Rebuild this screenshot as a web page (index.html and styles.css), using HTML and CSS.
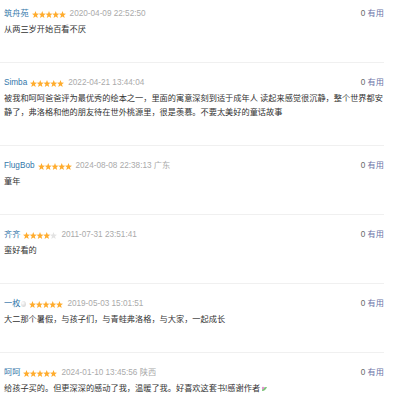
FILE: index.html
```html
<!DOCTYPE html>
<html lang="zh-CN">
<head>
  <meta charset="UTF-8">
  <title>短评</title>
  <link rel="stylesheet" href="styles.css">
</head>
<body>

<svg width="0" height="0" class="defs">
  <defs>
    <polygon id="star" points="3.5,0.1 4.45,2.5 7,2.65 5,4.25 5.7,6.9 3.5,5.4 1.3,6.9 2,4.25 0,2.65 2.55,2.5"/>
  </defs>
</svg>

<div class="comments">
  <div class="comment">
    <div class="comment-info">
      <a class="user">筑舟苑</a>
      <svg class="stars" width="34" height="7" viewBox="0 0 34 7"><use href="#star" x="0"/><use href="#star" x="6.75"/><use href="#star" x="13.5"/><use href="#star" x="20.25"/><use href="#star" x="27"/></svg>
      <span class="time">2020-04-09 22:52:50</span>
      <span class="vote"><span class="count">0</span> <a>有用</a></span>
    </div>
    <p class="short">从两三岁开始百看不厌</p>
  </div>

  <div class="comment">
    <div class="comment-info">
      <a class="user">Simba</a>
      <svg class="stars" width="34" height="7" viewBox="0 0 34 7"><use href="#star" x="0"/><use href="#star" x="6.75"/><use href="#star" x="13.5"/><use href="#star" x="20.25"/><use href="#star" x="27"/></svg>
      <span class="time">2022-04-21 13:44:04</span>
      <span class="vote"><span class="count">0</span> <a>有用</a></span>
    </div>
    <p class="short">被我和呵呵爸爸评为最优秀的绘本之一，里面的寓意深刻到适于成年人 读起来感觉很沉静，整个世界都安静了，弗洛格和他的朋友待在世外桃源里，很是羡慕。不要太美好的童话故事</p>
  </div>

  <div class="comment">
    <div class="comment-info">
      <a class="user">FlugBob</a>
      <svg class="stars" width="34" height="7" viewBox="0 0 34 7"><use href="#star" x="0"/><use href="#star" x="6.75"/><use href="#star" x="13.5"/><use href="#star" x="20.25"/><use href="#star" x="27"/></svg>
      <span class="time">2024-08-08 22:38:13 广东</span>
      <span class="vote"><span class="count">0</span> <a>有用</a></span>
    </div>
    <p class="short">童年</p>
  </div>

  <div class="comment">
    <div class="comment-info">
      <a class="user">齐齐</a>
      <svg class="stars" width="34" height="7" viewBox="0 0 34 7"><use href="#star" x="0"/><use href="#star" x="6.75"/><use href="#star" x="13.5"/><use href="#star" x="20.25"/><use href="#star" x="27" class="off"/></svg>
      <span class="time">2011-07-31 23:51:41</span>
      <span class="vote"><span class="count">0</span> <a>有用</a></span>
    </div>
    <p class="short">蛮好看的</p>
  </div>

  <div class="comment">
    <div class="comment-info">
      <a class="user">一枚<span class="egg"></span></a>
      <svg class="stars" width="34" height="7" viewBox="0 0 34 7"><use href="#star" x="0"/><use href="#star" x="6.75"/><use href="#star" x="13.5"/><use href="#star" x="20.25"/><use href="#star" x="27"/></svg>
      <span class="time">2019-05-03 15:01:51</span>
      <span class="vote"><span class="count">0</span> <a>有用</a></span>
    </div>
    <p class="short">大二那个暑假，与孩子们，与青蛙弗洛格，与大家，一起成长</p>
  </div>

  <div class="comment">
    <div class="comment-info">
      <a class="user">呵呵</a>
      <svg class="stars" width="34" height="7" viewBox="0 0 34 7"><use href="#star" x="0"/><use href="#star" x="6.75"/><use href="#star" x="13.5"/><use href="#star" x="20.25"/><use href="#star" x="27"/></svg>
      <span class="time">2024-01-10 13:45:56 陕西</span>
      <span class="vote"><span class="count">0</span> <a>有用</a></span>
    </div>
    <p class="short">给孩子买的。但更深深的感动了我，温暖了我。好喜欢这套书!感谢作者<svg class="sprout" width="7" height="6" viewBox="0 0 7 6"><path d="M1 5 C1 2 3 1 6 1 C5 3 4 5 1 5Z" fill="#7cc47a"/><circle cx="2" cy="2" r="1.2" fill="#e58fd0"/></svg></p>
  </div>
</div>

<div class="footer-bar"></div>

</body>
</html>
```

FILE: styles.css
```css
body {
  margin: 0;
  background-color: #fff;
  font-family: "Liberation Sans", "Noto Sans CJK SC", sans-serif;
  font-size: 8.2px;
  color: #333;
  overflow: hidden;
}

.defs {
  position: absolute;
}

.comments {
  width: 384px;
  margin-top: -6px;
}

.comment {
  padding: 13px 0 25px 4px;
  border-bottom: 1px solid #f0f0f0;
}

.comment-info {
  display: flex;
  align-items: center;
  height: 14px;
  line-height: 14px;
}

.user {
  color: #3377aa;
  display: flex;
  align-items: center;
}

.egg {
  display: inline-block;
  width: 5px;
  height: 6px;
  margin-left: 1px;
  border-radius: 50% 50% 50% 50% / 60% 60% 40% 40%;
  background: radial-gradient(circle at 35% 35%, #fff, #d8d8d8 70%, #b5b5b5);
}

.stars {
  margin-left: 3px;
  fill: #ffac2d;
}

.stars .off {
  fill: #e3e3e3;
}

.time {
  margin-left: 4px;
  color: #aaa;
}

.vote {
  margin-left: auto;
  color: #666;
}

.vote a {
  color: #6b73a8;
}

.short {
  margin: 2px 0 0;
  line-height: 14px;
  color: #333;
}

.sprout {
  vertical-align: middle;
  margin-left: 1px;
}

.footer-bar {
  height: 20px;
  margin-top: -6px;
  background-color: #f8f8f8;
}
```
